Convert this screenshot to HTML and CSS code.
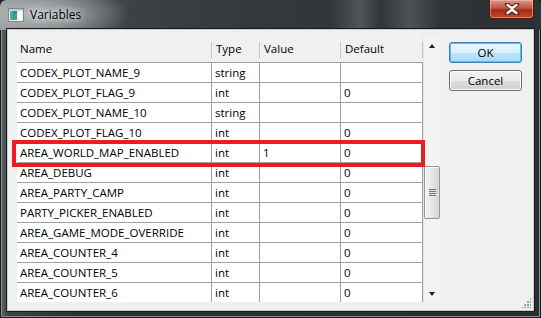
FILE: index.html
```html
<!DOCTYPE html>
<html lang="en">
<head>
  <meta charset="UTF-8">
  <title>Variables</title>
  <link rel="stylesheet" href="styles.css">
</head>
<body>
  <div class="window">
    <div class="titlebar">
      <svg class="app-icon" width="16" height="14" viewBox="0 0 16 14">
        <rect x="0.5" y="0.5" width="15" height="13" fill="#e8eef0" stroke="#7d8a90"/>
        <rect x="2" y="3" width="7" height="9" fill="#3d8a8a"/>
        <rect x="2" y="3" width="3" height="9" fill="#58a6b4"/>
        <rect x="6" y="6" width="3" height="6" fill="#4caa5a"/>
        <rect x="10" y="3" width="4" height="9" fill="#ffffff"/>
        <rect x="1" y="1" width="14" height="1.5" fill="#b6c6cc"/>
      </svg>
      <span class="title">Variables</span>
      <div class="close">
        <svg width="16" height="12" viewBox="0 0 16 12">
          <path d="M3 1.5 L8 5 L13 1.5 M3 10.5 L8 7 L13 10.5" stroke="#3a2a2a" stroke-width="4.2" fill="none" stroke-linecap="round"/>
          <path d="M3.5 2 L8 5.3 L12.5 2 M3.5 10 L8 6.7 L12.5 10" stroke="#ffffff" stroke-width="2.4" fill="none" stroke-linecap="round"/>
        </svg>
      </div>
    </div>

    <div class="client">
      <div class="list">
        <div class="grid">
          <div class="row head">
            <span class="c-name">Name</span>
            <span class="c-type">Type</span>
            <span class="c-value">Value</span>
            <span class="c-default">Default</span>
          </div>
          <div class="row"><span class="c-name">CODEX_PLOT_NAME_9</span><span class="c-type">string</span><span class="c-value"></span><span class="c-default"></span></div>
          <div class="row"><span class="c-name">CODEX_PLOT_FLAG_9</span><span class="c-type">int</span><span class="c-value"></span><span class="c-default">0</span></div>
          <div class="row"><span class="c-name">CODEX_PLOT_NAME_10</span><span class="c-type">string</span><span class="c-value"></span><span class="c-default"></span></div>
          <div class="row"><span class="c-name">CODEX_PLOT_FLAG_10</span><span class="c-type">int</span><span class="c-value"></span><span class="c-default">0</span></div>
          <div class="row"><span class="c-name">AREA_WORLD_MAP_ENABLED</span><span class="c-type">int</span><span class="c-value">1</span><span class="c-default">0</span></div>
          <div class="row"><span class="c-name">AREA_DEBUG</span><span class="c-type">int</span><span class="c-value"></span><span class="c-default">0</span></div>
          <div class="row"><span class="c-name">AREA_PARTY_CAMP</span><span class="c-type">int</span><span class="c-value"></span><span class="c-default">0</span></div>
          <div class="row"><span class="c-name">PARTY_PICKER_ENABLED</span><span class="c-type">int</span><span class="c-value"></span><span class="c-default">0</span></div>
          <div class="row"><span class="c-name">AREA_GAME_MODE_OVERRIDE</span><span class="c-type">int</span><span class="c-value"></span><span class="c-default">0</span></div>
          <div class="row"><span class="c-name">AREA_COUNTER_4</span><span class="c-type">int</span><span class="c-value"></span><span class="c-default">0</span></div>
          <div class="row"><span class="c-name">AREA_COUNTER_5</span><span class="c-type">int</span><span class="c-value"></span><span class="c-default">0</span></div>
          <div class="row"><span class="c-name">AREA_COUNTER_6</span><span class="c-type">int</span><span class="c-value"></span><span class="c-default">0</span></div>
        </div>
        <div class="scrollbar">
          <div class="arrow up"></div>
          <div class="track">
            <div class="thumb"><div class="grip"></div></div>
          </div>
          <div class="arrow down"></div>
        </div>
      </div>

      <div class="buttons">
        <button class="btn default">OK</button>
        <button class="btn">Cancel</button>
      </div>
      <div class="resize-grip"></div>
    </div>

    <!-- annotation drawn over the selected row -->
    <div class="highlight"></div>
  </div>
</body>
</html>
```

FILE: styles.css
```css
body {
  margin: 0;
  background: #1e2224;
  font-family: 'Open Sans', 'Noto Sans', sans-serif;
  font-size: 11.5px;
  color: #000;
}
.window {
  position: relative;
  width: 541px;
  height: 318px;
  display: flex;
  flex-direction: column;
  border-radius: 6px 6px 0 0;
  background: linear-gradient(to right, #62676a 0px, #3e4345 8px, #2c3032 80px, #2a2e30 100%);
  box-shadow: inset 0 0 0 1px #1a1c1d, inset 0 0 0 2px #8c9092;
  overflow: hidden;
}
.titlebar {
  height: 30px;
  flex: none;
  display: flex;
  align-items: flex-start;
  padding: 0 8px;
  box-sizing: border-box;
  border-radius: 6px 6px 0 0;
  background:
    radial-gradient(ellipse 90px 26px at 40px 14px, rgba(196,202,204,0.8), rgba(196,202,204,0) 100%),
    linear-gradient(to right, rgba(255,255,255,0) 330px, rgba(140,146,148,0.35) 360px, rgba(255,255,255,0) 380px, rgba(120,126,128,0.4) 410px, rgba(255,255,255,0) 440px),
    linear-gradient(to right, #8e9496 0px, #6b7173 60px, #3c4143 130px, #33383a 260px, #2d3133 100%);
}
.app-icon {
  margin-top: 8px;
  flex: none;
}
.title {
  margin: 6px 0 0 6px;
  font-size: 12px;
  text-shadow: 0 0 6px rgba(255,255,255,0.9), 0 0 10px rgba(255,255,255,0.6);
}
.close {
  margin-left: auto;
  margin-right: -1px;
  width: 45px;
  height: 19px;
  display: flex;
  align-items: center;
  justify-content: center;
  box-sizing: border-box;
  border: 1px solid #4a1e18;
  border-top: none;
  border-radius: 0 0 4px 4px;
  background: linear-gradient(to bottom, #d89a8a 0%, #c4543e 45%, #a82a16 55%, #c24a30 100%);
  box-shadow: inset 0 0 0 1px rgba(255,210,200,0.45);
}
.client {
  position: relative;
  margin: 0 8px;
  height: 280px;
  display: flex;
  align-items: flex-start;
  padding: 7px 0 0 9px;
  box-sizing: border-box;
  background: #f0f0f0;
  box-shadow: 0 0 0 1px #c8cbcd, 0 0 0 2px #1a1c1d;
}
.list {
  display: flex;
  width: 423px;
  height: 265px;
}
.grid {
  width: 406px;
  display: flex;
  flex-direction: column;
}
.row {
  display: flex;
  height: 20px;
  box-sizing: border-box;
  background: #fff;
  border-top: 1px solid #a0a0a0;
}
.row span {
  display: flex;
  align-items: center;
  padding-left: 3px;
  box-sizing: border-box;
  border-right: 1px solid #a0a0a0;
  white-space: nowrap;
}
.c-name { width: 195px; }
.c-type { width: 48px; }
.c-value { width: 81px; }
.c-default { width: 82px; }
.row.head {
  height: 25px;
  background: #f0f0f0;
  border-top: none;
}
.row.head span {
  position: relative;
  border: none;
  padding: 0 0 3px 4px;
}
.row.head span::before {
  content: '';
  position: absolute;
  left: -1px;
  top: 5px;
  height: 16px;
  border-left: 1px solid #c9c9c9;
}
.row.head .c-name { padding-left: 3px; }
.row.head .c-name::before { left: 0; border-color: #fafafa; }
.row.head .c-default::after {
  content: '';
  position: absolute;
  right: 0;
  top: 5px;
  height: 16px;
  border-left: 1px solid #c9c9c9;
}
.scrollbar {
  width: 17px;
  display: flex;
  flex-direction: column;
  background: #f4f4f4;
  border-left: 1px solid #e4e4e4;
  box-sizing: border-box;
}
.arrow {
  height: 17px;
  flex: none;
  display: flex;
  align-items: center;
  justify-content: center;
}
.arrow::before {
  content: '';
  border-left: 3.5px solid transparent;
  border-right: 3.5px solid transparent;
}
.arrow.up::before { border-bottom: 4px solid #202020; }
.arrow.down::before { border-top: 4px solid #202020; }
.track {
  flex: 1;
  padding-top: 112px;
}
.thumb {
  height: 53px;
  box-sizing: border-box;
  border: 1px solid #979797;
  border-radius: 2px;
  background: linear-gradient(to right, #f3f3f3 0%, #e6e6e6 50%, #d4d4d4 100%);
  box-shadow: inset 1px 1px 0 #fff;
  display: flex;
  align-items: center;
  justify-content: center;
}
.grip {
  width: 7px;
  height: 7px;
  background: repeating-linear-gradient(to bottom, #6f6f6f 0 1px, #e8e8e8 1px 2px);
}
.buttons {
  margin: 5px 0 0 9px;
  display: flex;
  flex-direction: column;
  gap: 7px;
}
.btn {
  width: 73px;
  height: 21px;
  padding: 0;
  font-family: 'Open Sans', 'Noto Sans', sans-serif;
  font-size: 11.5px;
  color: #000;
  border: 1px solid #707070;
  border-radius: 3px;
  background: linear-gradient(to bottom, #f2f2f2 0%, #ebebeb 50%, #dddddd 51%, #cfcfcf 100%);
  box-shadow: inset 0 0 0 1px #fbfbfb;
}
.btn.default {
  border-color: #3c7fb1;
  background: linear-gradient(to bottom, #eaf6fd 0%, #d9f0fc 50%, #bee6fd 51%, #a7d9f5 100%);
  box-shadow: inset 0 0 0 1px #48c4f5;
}
.resize-grip {
  position: absolute;
  right: 2px;
  bottom: 2px;
  width: 10px;
  height: 10px;
  background: radial-gradient(circle at 1px 1px, #9a9a9a 0.9px, transparent 1px) 0 0 / 3px 3px;
  clip-path: polygon(100% 0, 100% 100%, 0 100%);
}
.highlight {
  position: absolute;
  left: 12px;
  top: 140px;
  width: 413px;
  height: 27px;
  box-sizing: border-box;
  border: 4px solid #ed1c24;
}
```
